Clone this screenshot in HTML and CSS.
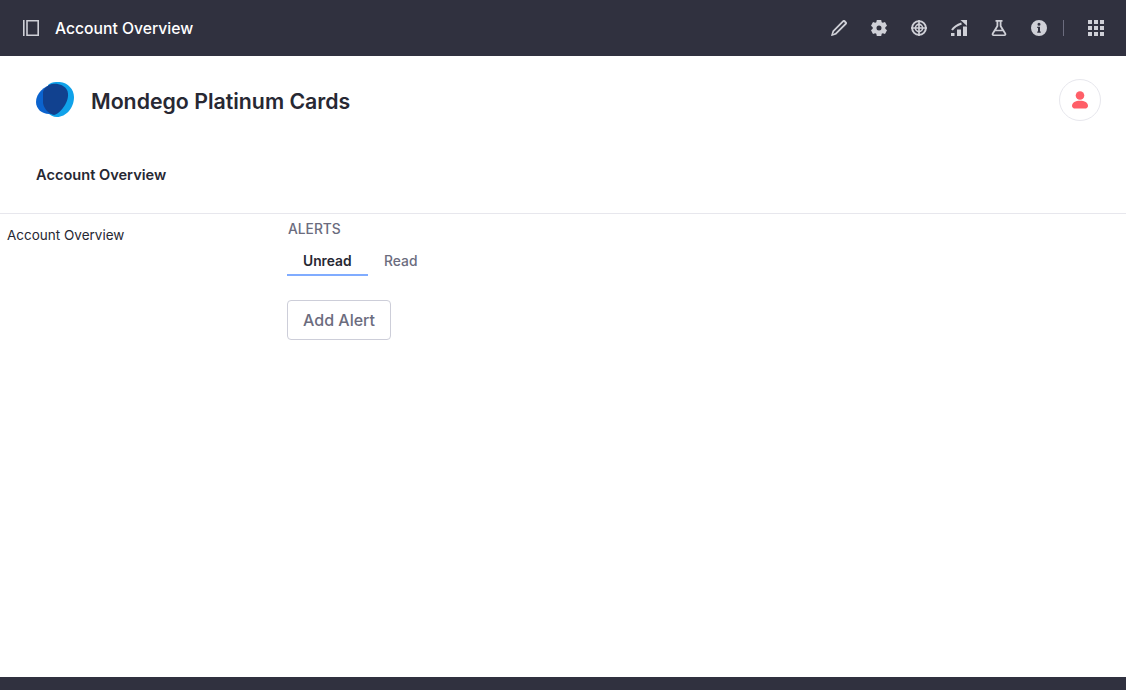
FILE: index.html
```html
<!DOCTYPE html>
<html lang="en">
<head>
<meta charset="utf-8">
<title>Account Overview</title>
<link rel="stylesheet" href="styles.css">
</head>
<body>
<div class="page">
  <header class="topbar">
    <div class="topbar-left">
      <svg class="ic ic-panel" viewBox="0 0 16 16" width="16" height="16"><path d="M0 0h1.600v16H0zM3.200 0H16v16H3.200zM4.800 1.600v12.800h9.600V1.600z" fill-rule="evenodd"/></svg>
      <span class="topbar-title">Account Overview</span>
    </div>
    <div class="topbar-right">
      <svg class="ic" viewBox="0 0 16 16" width="16" height="16"><path d="M11.600.600a1.900 1.900 0 0 1 2.700 0l1.100 1.100a1.900 1.900 0 0 1 0 2.700L5.300 14.500.600 15.900a.4.400 0 0 1-.5-.5l1.400-4.700zM12.400 2.300 3.200 11.500l-1.100 2.400 2.400-1.100 9.200-9.200a.6.600 0 0 0 0-.8l-.5-.5a.6.600 0 0 0-.8 0z" fill-rule="evenodd"/></svg>
      <svg class="ic" viewBox="0 0 16 16" width="16" height="16"><path d="M5.800 0h4.400l.5 2.200 1.100.6 2.200-.7 2 3.600-1.700 1.500v1.600l1.700 1.500-2 3.600-2.200-.7-1.100.6-.5 2.200H5.800l-.5-2.200-1.100-.6-2.200.7-2-3.600 1.700-1.500V7.200L0 5.700l2-3.600 2.200.7 1.100-.6zM8 5.500a2.500 2.500 0 1 0 0 5 2.500 2.500 0 0 0 0-5z" fill-rule="evenodd"/></svg>
      <svg class="ic" viewBox="0 0 16 16" width="16" height="16"><circle cx="8" cy="8" r="6.900" fill="none" stroke-width="1.900" class="s"/><circle cx="8" cy="8" r="3.600" fill="none" stroke-width="1.600" class="s"/><path d="M8 0v16M0 8h16" fill="none" stroke-width="1.700" class="s"/></svg>
      <svg class="ic" viewBox="0 0 16 16" width="16" height="16"><path d="M1 10C3 7 6 5 10.500 3.500" fill="none" stroke-width="2" class="s"/><path d="M9.500 0H16v6z"/><path d="M0 13h3.500v3H0zM6 9.500h4V16H6zM12 6.500h4V16h-4z"/></svg>
      <svg class="ic" viewBox="0 0 16 16" width="16" height="16"><path d="M4.500 0h7v1.800h-1v4l4.600 7.400c.7 1.200-.1 2.800-1.600 2.800H2.500C1 16 .2 14.400.9 13.200l4.600-7.400v-4h-1zM7.300 1.800v4.500L5.300 9.700h5.400L8.700 6.300V1.800zM4.300 11.300l-1.800 2.800c-.1.200 0 .3.200.3h10.600c.2 0 .3-.1.200-.3l-1.800-2.800z" fill-rule="evenodd"/></svg>
      <svg class="ic" viewBox="0 0 16 16" width="16" height="16"><path d="M8 0a8 8 0 1 1 0 16A8 8 0 0 1 8 0zM8 2.700a1.500 1.500 0 1 0 0 3 1.500 1.500 0 0 0 0-3zM6.200 6.800v1.300h.8v3.400h-.8v1.300h3.600v-1.300H9V6.800z" fill-rule="evenodd"/></svg>
      <span class="divider"></span>
      <svg class="ic ic-grid" viewBox="0 0 16 16" width="16" height="16"><path d="M0 0h4v4H0zM6 0h4v4H6zM12 0h4v4h-4zM0 6h4v4H0zM6 6h4v4H6zM12 6h4v4h-4zM0 12h4v4H0zM6 12h4v4H6zM12 12h4v4h-4z"/></svg>
    </div>
  </header>

  <section class="site-head">
    <div class="brand">
      <svg class="logo" viewBox="0 0 38 36" width="38" height="36">
        <path d="M20 0C30-1 38 6 38 15 38 26 30 35 21 35 17 35 14 33 12 31V3C14 1 17 0 20 0z" fill="#10a2ea"/>
        <path d="M17 2C8 4 0 11 0 20 0 27 6 32 13 32 15 32 17 32 19 31L20 3C19 2 18 2 17 2z" fill="#0b63ce"/>
        <path d="M16 2C22 1 28 3 31 8 33 12 32 18 29 23 26 28 22 32 18 33 13 32 8 27 7 21V10C8 6 12 3 16 2z" fill="#11418f"/>
      </svg>
      <h1 class="brand-name">Mondego Platinum Cards</h1>
    </div>
    <button class="avatar" aria-label="User">
      <svg viewBox="0 0 16 18" width="16" height="18"><circle cx="8" cy="4.500" r="4.300" fill="#ff5f68"/><path d="M0 15c0-3.500 3.500-5.200 8-5.200s8 1.700 8 5.200c0 1.500-1.500 2.600-3 2.600H3c-1.500 0-3-1.100-3-2.600z" fill="#ff5f68"/></svg>
    </button>
  </section>

  <nav class="page-nav"><span class="page-nav-item">Account Overview</span></nav>

  <main class="content">
    <aside class="sidebar">Account Overview</aside>
    <div class="panel">
      <h2 class="panel-title">ALERTS</h2>
      <div class="tabs">
        <span class="tab tab-active">Unread</span>
        <span class="tab">Read</span>
      </div>
      <button class="btn">Add Alert</button>
    </div>
  </main>

  <footer class="footer"></footer>
</div>
</body>
</html>
```

FILE: styles.css
```css
* { box-sizing: border-box; }
html, body { margin: 0; height: 100%; }
body { font-family: Inter, "Liberation Sans", sans-serif; background: #fff; color: #272833; overflow: hidden; }
.page { height: 690px; display: flex; flex-direction: column; }

.topbar { flex: 0 0 56px; background: #30313f; display: flex; align-items: center; justify-content: space-between; padding: 0 22px 0 23px; }
.topbar-left { display: flex; align-items: center; gap: 16px; }
.topbar-title { color: #fff; font-size: 15.7px; font-weight: 500; line-height: 20px; padding-top: 1px; }
.topbar-right { display: flex; align-items: center; gap: 24px; }
.ic { display: block; fill: #cfd0d7; flex: none; }
.ic .s { stroke: #cfd0d7; }
.divider { width: 1px; height: 16px; background: #6b6c7e; margin-left: -8px; }

.site-head { flex: 0 0 88px; display: flex; align-items: center; justify-content: space-between; padding: 0 25px 0 36px; }
.brand { display: flex; align-items: center; gap: 17px; }
.logo { display: block; }
.brand-name { margin: 0; padding-top: 1px; font-size: 21.3px; font-weight: 600; line-height: 28px; color: #272833; }
.avatar { width: 42px; height: 42px; border-radius: 50%; border: 1px solid #e7e7ed; background: #fff; padding: 0; display: flex; align-items: center; justify-content: center; }

.page-nav { flex: 0 0 70px; padding: 21px 36px 0; border-bottom: 1px solid #e7e7ed; }
.page-nav-item { font-size: 14.6px; font-weight: 600; line-height: 20px; display: block; }

.content { flex: 1; display: flex; min-height: 0; }
.sidebar { flex: 0 0 287px; padding: 13px 0 0 7px; font-size: 13.5px; line-height: 17px; color: #272833; }
.panel { flex: 1; padding: 8px 0 0; }
.panel-title { margin: 0; padding-left: 1px; font-size: 13.8px; font-weight: 500; line-height: 14px; color: #6b6c7e; }
.tabs { display: flex; margin-top: 15px; }
.tab { padding: 0 16.500px 5px 16px; height: 25px; font-size: 13.8px; line-height: 20px; font-weight: 500; color: #6b6c7e; border-bottom: 2px solid transparent; }
.tab-active { color: #272833; font-weight: 600; border-bottom-color: #80acff; }
.btn { display: block; margin-top: 24px; width: 104px; height: 40px; border: 1px solid #cdced9; border-radius: 4px; background: #fff; color: #6b6c7e; font: 500 16px/24px Inter, "Liberation Sans", sans-serif; padding: 0; }

.footer { flex: 0 0 13px; background: #30313f; }
```
